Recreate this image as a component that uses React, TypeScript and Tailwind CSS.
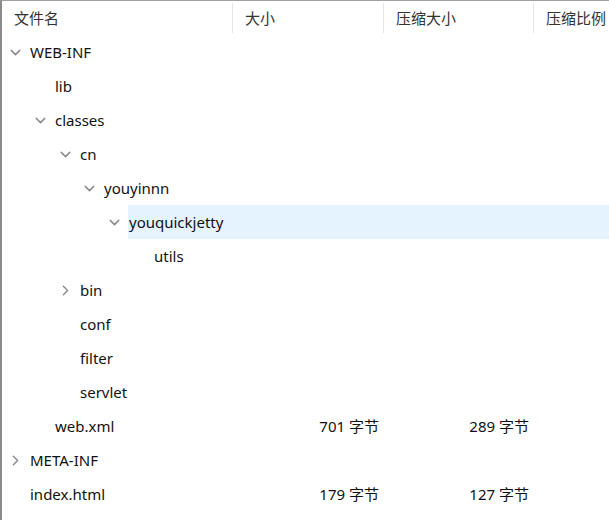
import { ChevronDown, ChevronRight } from 'lucide-react';

interface Entry {
  name: string;
  level: number;
  toggle?: 'open' | 'closed';
  size?: string;
  packed?: string;
  selected?: boolean;
}

const entries: Entry[] = [
  { name: 'WEB-INF', level: 0, toggle: 'open' },
  { name: 'lib', level: 1 },
  { name: 'classes', level: 1, toggle: 'open' },
  { name: 'cn', level: 2, toggle: 'open' },
  { name: 'youyinnn', level: 3, toggle: 'open' },
  { name: 'youquickjetty', level: 4, toggle: 'open', selected: true },
  { name: 'utils', level: 5 },
  { name: 'bin', level: 2, toggle: 'closed' },
  { name: 'conf', level: 2 },
  { name: 'filter', level: 2 },
  { name: 'servlet', level: 2 },
  { name: 'web.xml', level: 1, size: '701 字节', packed: '289 字节' },
  { name: 'META-INF', level: 0, toggle: 'closed' },
  { name: 'index.html', level: 0, size: '179 字节', packed: '127 字节' },
];

const Row = ({ e }: { e: Entry }) => {
  // indent in px, measured from the left edge of the window
  const lead = Math.round(29 + 24.8 * e.level) - 2;
  return (
    <div className="flex h-[34px] items-stretch">
      <div className="flex shrink-0 items-center justify-end pr-[5px]" style={{ width: lead }}>
        {e.toggle === 'open' && <ChevronDown size={17} strokeWidth={2} className="text-[#8a8a8a]" />}
        {e.toggle === 'closed' && <ChevronRight size={17} strokeWidth={2} className="text-[#8a8a8a]" />}
      </div>
      <div className={`flex flex-1 items-center ${e.selected ? 'bg-[#e5f3ff]' : ''}`}>
        <div className="shrink-0 pl-[1px] text-[#111]" style={{ width: 230 - lead }}>
          {e.name}
        </div>
        <div className="w-[151px] shrink-0 pr-1 text-right text-[#111]">{e.size}</div>
        <div className="w-[150px] shrink-0 pr-1 text-right text-[#111]">{e.packed}</div>
      </div>
    </div>
  );
};

export default function App() {
  return (
    <div
      className="h-[520px] w-[609px] overflow-hidden border-l-2 border-t border-l-[#8a8a8a] border-t-[#a0a0a0] bg-white text-[15px]"
      style={{ fontFamily: '"Noto Sans", "Noto Sans CJK SC", sans-serif' }}
    >
      <div className="flex h-[34px] items-stretch text-[#333]">
        <div className="flex w-[230px] shrink-0 items-center pl-3">文件名</div>
        <div className="my-[2px] w-px bg-[#e5e5e5]" />
        <div className="flex w-[150px] shrink-0 items-center pl-3">大小</div>
        <div className="my-[2px] w-px bg-[#e5e5e5]" />
        <div className="flex w-[149px] shrink-0 items-center pl-3">压缩大小</div>
        <div className="my-[2px] w-px bg-[#e5e5e5]" />
        <div className="flex flex-1 items-center pl-3 whitespace-nowrap">压缩比例</div>
      </div>
      {entries.map((e) => (
        <Row key={e.name} e={e} />
      ))}
    </div>
  );
}
